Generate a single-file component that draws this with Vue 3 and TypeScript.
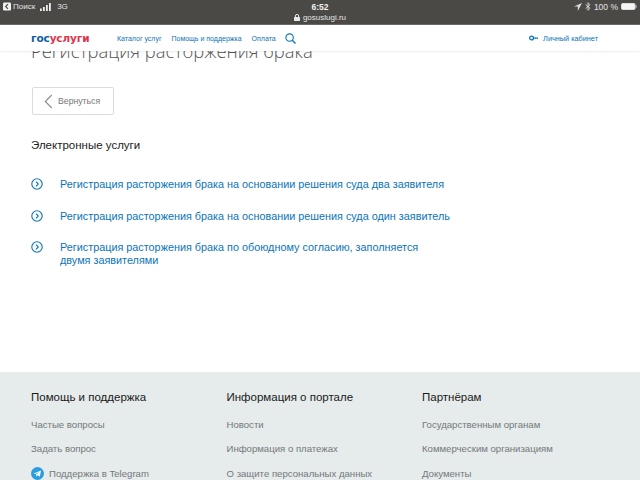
<template>
  <div class="page">
    <div class="statusbar">
      <div class="status-row">
        <div class="status-left">
          <svg width="8" height="9" viewBox="0 0 9 9"><rect width="9" height="9" rx="1.5" fill="#f2f2f2" /><path d="M5.6 1.8 3 4.5l2.6 2.7" fill="none" stroke="#4a4946" stroke-width="1.3" /></svg>
          <span>Поиск</span>
          <svg class="signal" width="11" height="8" viewBox="0 0 11 8"><rect x="0" y="5.5" width="1.8" height="2.5" fill="#eee" /><rect x="3" y="4" width="1.8" height="4" fill="#eee" /><rect x="6" y="2" width="1.8" height="6" fill="#eee" /><rect x="9" y="0" width="1.8" height="8" fill="#eee" /></svg>
          <span class="net">3G</span>
        </div>
        <div class="time">6:52</div>
        <div class="status-right">
          <svg width="8" height="8" viewBox="0 0 8 8"><path d="M8 0 0 3.6h3.8V8z" fill="#ddd" /></svg>
          <svg width="6" height="9" viewBox="0 0 6 9"><path d="M.6 2.4 5 6.3 3 8.3V.7l2 2L.6 6.6" fill="none" stroke="#ddd" stroke-width=".9" /></svg>
          <span>100 %</span>
          <svg width="16" height="7" viewBox="0 0 16 7"><rect x=".5" y=".5" width="13.5" height="6" rx="1.2" fill="#f5f5f5" stroke="#ddd" /><rect x="14.6" y="2.3" width="1" height="2.4" fill="#ccc" /></svg>
        </div>
      </div>
      <div class="url">
        <svg width="6" height="7" viewBox="0 0 6 7"><rect y="3" width="6" height="4" rx=".6" fill="#e8e8e8" /><path d="M1.4 3.2V2a1.6 1.6 0 0 1 3.2 0v1.2" fill="none" stroke="#e8e8e8" /></svg>
        <span>gosuslugi.ru</span>
      </div>
    </div>

    <header class="topnav">
      <div class="logo"><span class="logo-gos">гос</span><span class="logo-usl">услуги</span></div>
      <nav class="menu">
        <a v-for="item in menu" :key="item">{{ item }}</a>
        <svg class="search" width="11" height="11" viewBox="0 0 11 11"><circle cx="4.6" cy="4.6" r="3.7" fill="none" stroke="#0b74b8" stroke-width="1.1" /><path d="m7.3 7.3 3.2 3.2" stroke="#0b74b8" stroke-width="1.3" /></svg>
      </nav>
      <div class="cabinet">
        <svg width="9" height="6" viewBox="0 0 9 6"><circle cx="2.6" cy="3" r="1.9" fill="none" stroke="#0b74b8" stroke-width="1.3" /><path d="M4.5 2.5H9v1.6H8V3.4H6.8v.7H5.8V3.4H4.5z" fill="#0b74b8" /></svg>
        <span>Личный кабинет</span>
      </div>
    </header>

    <main class="content">
      <h1>Регистрация расторжения брака</h1>
      <button class="back">
        <svg width="9" height="15" viewBox="0 0 9 15"><path d="M7.8 1 1.3 7.5l6.5 6.5" fill="none" stroke="#8c8c8c" stroke-width="1.1" /></svg>
        <span>Вернуться</span>
      </button>
      <h2>Электронные услуги</h2>
      <ul class="services">
        <li v-for="s in services" :key="s">
          <svg width="12" height="12" viewBox="0 0 12 12"><circle cx="6" cy="6" r="5.2" fill="none" stroke="#0b74b8" stroke-width="1.1" /><path d="m5 3.7 2.3 2.3L5 8.3" fill="none" stroke="#0b74b8" stroke-width="1.1" /></svg>
          <a>{{ s }}</a>
        </li>
      </ul>
    </main>

    <footer class="footer">
      <div v-for="col in columns" :key="col.title" class="col">
        <h3>{{ col.title }}</h3>
        <a v-for="link in col.links" :key="link" class="foot-link">
          <svg v-if="link.includes('Telegram')" width="13" height="13" viewBox="0 0 13 13"><circle cx="6.5" cy="6.5" r="6.5" fill="#2a9ce0" /><path d="M2.6 6.4 10 3.4 8.8 9.8 6.5 8.2 5.3 9.4 5 7.4l3.6-2.7L4 7z" fill="#fff" /></svg>
          <span>{{ link }}</span>
        </a>
      </div>
    </footer>
  </div>
</template>

<script setup lang="ts">
const menu = ["Каталог услуг", "Помощь и поддержка", "Оплата"];

const services = [
  "Регистрация расторжения брака на основании решения суда два заявителя",
  "Регистрация расторжения брака на основании решения суда один заявитель",
  "Регистрация расторжения брака по обоюдному согласию, заполняется двумя заявителями",
];

const columns = [
  {
    title: "Помощь и поддержка",
    links: ["Частые вопросы", "Задать вопрос", "Поддержка в Telegram"],
  },
  {
    title: "Информация о портале",
    links: ["Новости", "Информация о платежах", "О защите персональных данных"],
  },
  {
    title: "Партнёрам",
    links: ["Государственным органам", "Коммерческим организациям", "Документы"],
  },
];
</script>

<style>
html,
body {
  margin: 0;
  overflow: hidden;
}
</style>

<style scoped>
.page {
  width: 640px;
  height: 480px;
  overflow: hidden;
  display: flex;
  flex-direction: column;
  font-family: "Liberation Sans", Arial, sans-serif;
  background: #fff;
}

.statusbar {
  height: 24px;
  flex: none;
  background: #4a4946;
  border-bottom: 1px solid #6b6b69;
  color: #e4e4e4;
  font-size: 8px;
}
.status-row {
  height: 13px;
  padding: 0 3px;
  display: flex;
  align-items: center;
  justify-content: space-between;
}
.status-left,
.status-right {
  display: flex;
  align-items: center;
  gap: 3px;
  width: 200px;
}
.status-left {
  gap: 2px;
}
.status-right {
  justify-content: flex-end;
  font-size: 8.5px;
}
.signal {
  margin-left: 3px;
}
.net {
  margin-left: 4px;
}
.time {
  font-weight: bold;
  font-size: 8.5px;
  color: #f2f2f2;
}
.url {
  display: flex;
  justify-content: center;
  align-items: center;
  gap: 3px;
  font-size: 8px;
  line-height: 9px;
}

.topnav {
  height: 26px;
  flex: none;
  display: flex;
  align-items: center;
  padding: 0 31px;
  background: #fff;
  box-shadow: 0 1px 2px rgba(0, 0, 0, 0.08);
  position: relative;
  z-index: 1;
}
.logo {
  font: bold 10.5px "DejaVu Sans", sans-serif;
  width: 86px;
  letter-spacing: -0.1px;
  flex: none;
}
.logo-gos {
  color: #0d5ea8;
}
.logo-usl {
  color: #e0324b;
}
.menu {
  display: flex;
  align-items: center;
  gap: 10px;
  font-size: 7px;
  color: #0b74b8;
}
.search {
  margin-left: -1px;
}
.cabinet {
  margin-left: auto;
  margin-right: 11px;
  display: flex;
  align-items: center;
  gap: 5px;
  font-size: 7.3px;
  color: #0b74b8;
}

.content {
  flex: 1;
  padding: 0 31px;
  overflow: hidden;
}
h1 {
  margin: -13px 0 0;
  font-size: 18.4px;
  line-height: 26px;
  font-weight: 300;
  font-family: "Open Sans", sans-serif;
  color: #555;
}
.back {
  margin: 23px 0 0 1px;
  width: 82px;
  height: 28px;
  display: flex;
  align-items: center;
  gap: 5px;
  padding: 0 0 0 11px;
  background: #fff;
  border: 1px solid #d9dcdd;
  border-radius: 2px;
  font: 8.7px "Liberation Sans", sans-serif;
  color: #777;
}
h2 {
  margin: 22px 0 0;
  font-size: 11.5px;
  line-height: 16px;
  font-weight: normal;
  color: #1a1a1a;
}
.services {
  list-style: none;
  margin: 25px 0 0;
  padding: 0;
  display: flex;
  flex-direction: column;
  gap: 18.5px;
  font-size: 10.83px;
  line-height: 13px;
  color: #0b74b8;
}
.services li {
  display: flex;
  gap: 17px;
  align-items: flex-start;
  max-width: 420px;
}
.services svg {
  flex: none;
}

.footer {
  height: 108px;
  flex: none;
  background: #e6ebeb;
  display: grid;
  grid-template-columns: 195.5px 195.5px 1fr;
  padding: 18px 31px 0;
  box-sizing: border-box;
}
h3 {
  margin: 0 0 14px;
  font-size: 11.5px;
  line-height: 14px;
  font-weight: normal;
  color: #1a1a1a;
}
.foot-link {
  display: flex;
  align-items: center;
  gap: 5px;
  height: 12px;
  margin-bottom: 12.5px;
  font-size: 9.6px;
  color: #73797b;
}
</style>
